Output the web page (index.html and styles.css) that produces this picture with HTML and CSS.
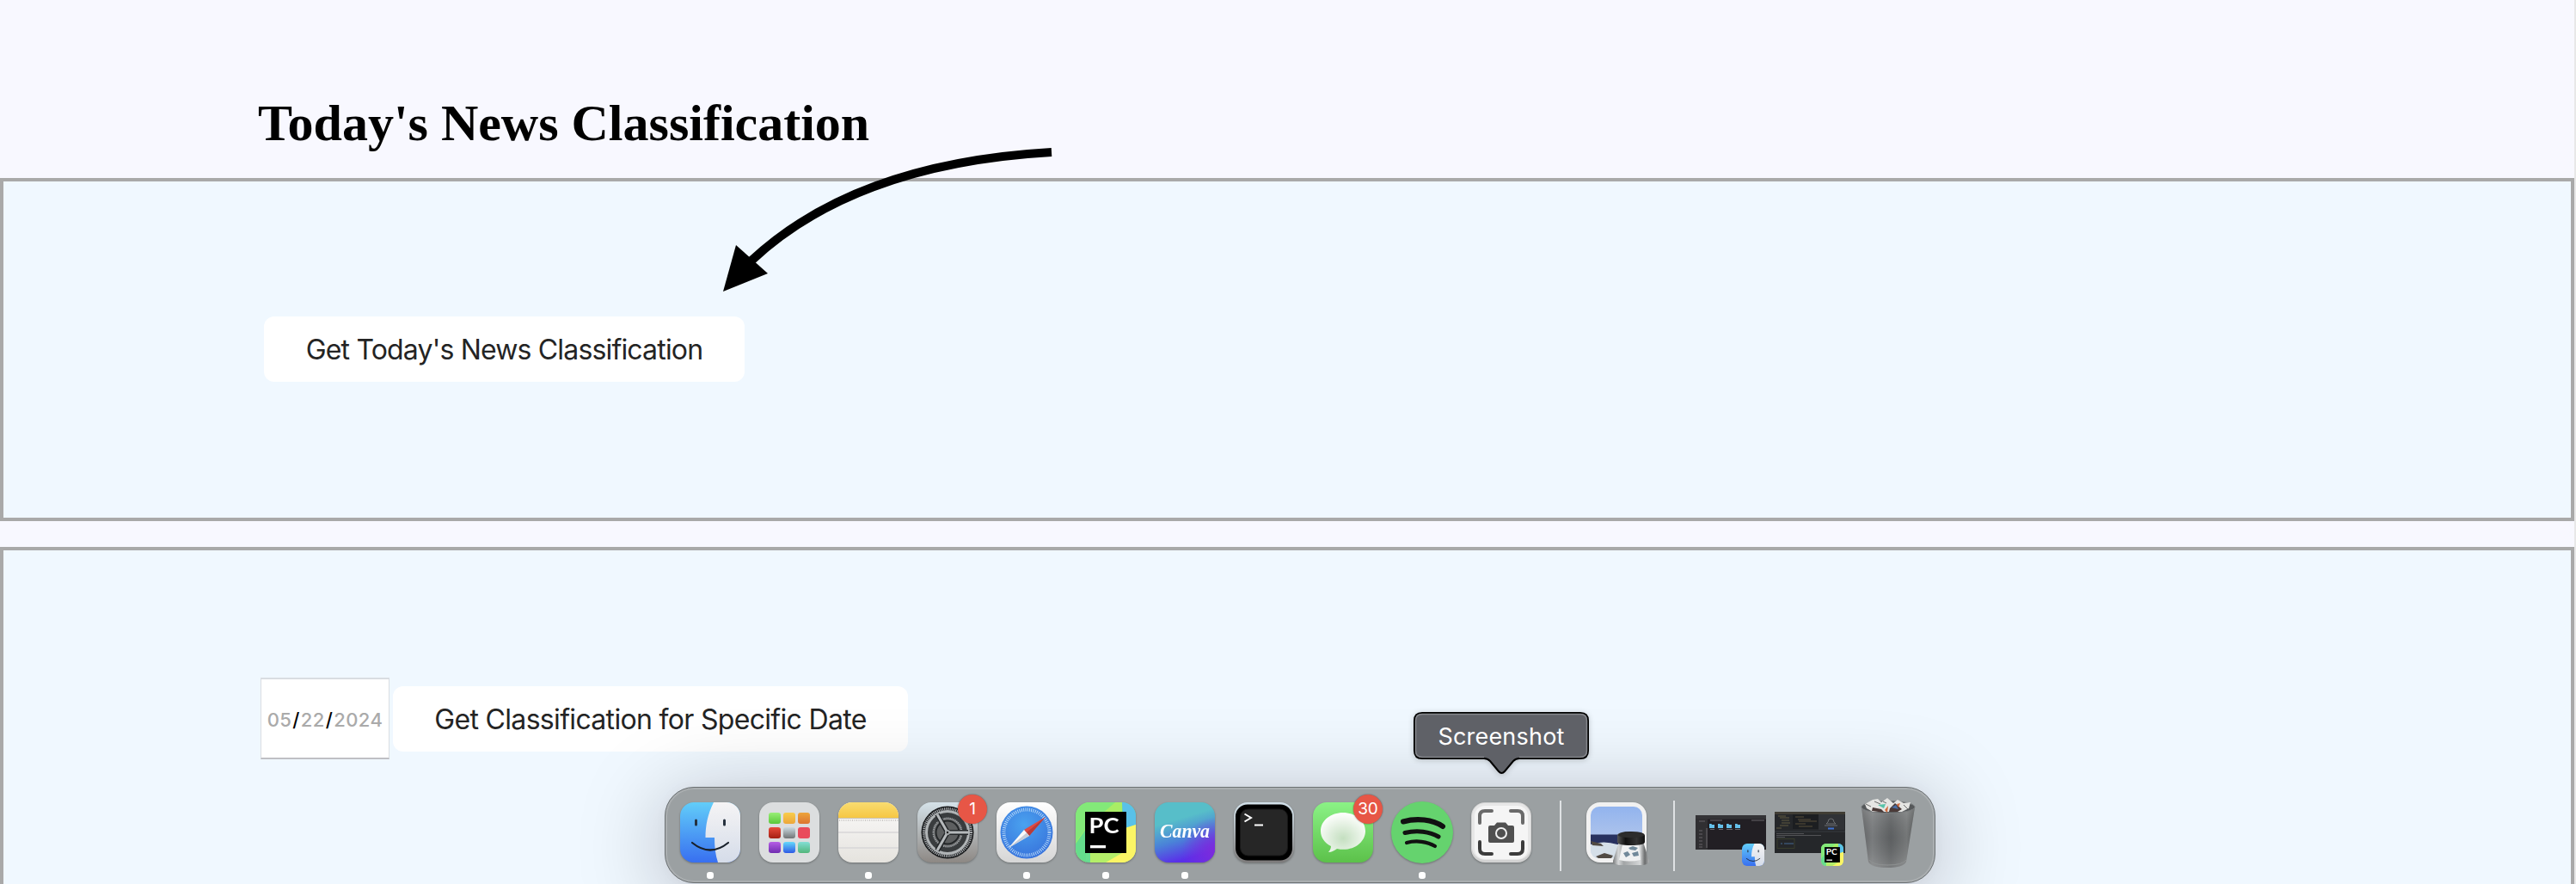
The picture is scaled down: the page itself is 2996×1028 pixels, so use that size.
FILE: index.html
```
<!DOCTYPE html>
<html lang="en">
<head>
<meta charset="utf-8">
<title>News Classification</title>
<link rel="stylesheet" href="styles.css">
</head>
<body>
<main class="page">
  <h1 class="title">Today's News Classification</h1>
  <section class="panel today">
    <button class="btn btn-today"><span class="t-today">Get Today's News Classification</span></button>
  </section>
  <section class="panel specific">
    <div class="date"><span>05</span><b>/</b><span>22</span><b>/</b><span>2024</span></div>
    <button class="btn btn-date"><span class="t-date">Get Classification for Specific Date</span></button>
  </section>
</main>

<svg class="arrow" viewBox="0 0 400 180" width="400" height="180">
  <path d="M393 17Q165 30 44 143" fill="none" stroke="#000" stroke-width="10"/>
  <path d="M11 179L26 125L63 158Z"/>
</svg>

<nav class="dock">
  <div class="app running">
    <svg class="icon" viewBox="0 0 70 70">
      <defs>
        <linearGradient id="fb" x2="0" y2="1"><stop stop-color="#62cdf9"/><stop offset="1" stop-color="#386ff0"/></linearGradient>
        <linearGradient id="fw" x2="0" y2="1"><stop stop-color="#f5f4f5"/><stop offset="1" stop-color="#d5dce9"/></linearGradient>
        <clipPath id="sq"><rect width="70" height="70" rx="16"/></clipPath>
      </defs>
      <g id="finder" clip-path="url(#sq)">
        <rect width="70" height="70" fill="url(#fb)"/>
        <path d="M39 0C32 14 29.500 27 29.500 41H40C40 52 41 61 44 70H70V0Z" fill="url(#fw)"/>
        <path d="M18.500 21V26M51.500 21V26" stroke="#26313f" stroke-width="3" stroke-linecap="round"/>
        <path d="M14 47Q35 64 56 47" fill="none" stroke="#18202b" stroke-width="2.200" stroke-linecap="round"/>
      </g>
    </svg>
  </div>
  <div class="app">
    <svg class="icon" viewBox="0 0 70 70">
      <defs>
        <linearGradient id="l1" x2="0" y2="1"><stop stop-color="#98ee76"/><stop offset="1" stop-color="#5bc83b"/></linearGradient>
        <linearGradient id="l2" x2="0" y2="1"><stop stop-color="#f8cd4c"/><stop offset="1" stop-color="#eda63a"/></linearGradient>
        <linearGradient id="l3" x2="0" y2="1"><stop stop-color="#eda43a"/><stop offset="1" stop-color="#dc7531"/></linearGradient>
        <linearGradient id="l4" x2="0" y2="1"><stop stop-color="#e94b3b"/><stop offset="1" stop-color="#a41f12"/></linearGradient>
        <linearGradient id="l5" x2="0" y2="1"><stop stop-color="#cbdae1"/><stop offset="1" stop-color="#717475"/></linearGradient>
        <linearGradient id="l7" x2="0" y2="1"><stop stop-color="#b65de6"/><stop offset="1" stop-color="#702db0"/></linearGradient>
        <linearGradient id="l8" x2="0" y2="1"><stop stop-color="#65d9fb"/><stop offset="1" stop-color="#2d59e5"/></linearGradient>
        <linearGradient id="l9" x2="0" y2="1"><stop stop-color="#83ded5"/><stop offset="1" stop-color="#52b67b"/></linearGradient>
      </defs>
      <rect width="70" height="70" rx="16" fill="#dcdedf"/>
      <rect x="11" y="12" width="14" height="13" rx="3" fill="url(#l1)"/><rect x="28" y="12" width="14" height="13" rx="3" fill="url(#l2)"/><rect x="45" y="12" width="14" height="13" rx="3" fill="url(#l3)"/>
      <rect x="11" y="29" width="14" height="13" rx="3" fill="url(#l4)"/><rect x="28" y="29" width="14" height="13" rx="3" fill="url(#l5)"/><rect x="45" y="29" width="14" height="13" rx="3" fill="#e94b5c"/>
      <rect x="11" y="46" width="14" height="13" rx="3" fill="url(#l7)"/><rect x="28" y="46" width="14" height="13" rx="3" fill="url(#l8)"/><rect x="45" y="46" width="14" height="13" rx="3" fill="url(#l9)"/>
    </svg>
  </div>
  <div class="app running">
    <svg class="icon" viewBox="0 0 70 70">
      <defs>
        <linearGradient id="ny" x2="0" y2="1"><stop stop-color="#f9dc70"/><stop offset="1" stop-color="#f6c744"/></linearGradient>
        <linearGradient id="nw" x2="0" y2="1"><stop stop-color="#fbfafa"/><stop offset="1" stop-color="#e5e3de"/></linearGradient>
      </defs>
      <g clip-path="url(#sq)">
        <rect width="70" height="70" fill="url(#nw)"/><rect width="70" height="18" fill="url(#ny)"/>
        <path d="M0 18.500H70" stroke="#c9c1ae"/><path d="M1 21H70" stroke="#bdbcb9" stroke-width="1.500" stroke-dasharray="1 1.500"/>
        <path d="M0 35H70M0 53H70" stroke="#d7d6d8" stroke-width="1.500"/>
      </g>
    </svg>
  </div>
  <div class="app">
    <svg class="icon" viewBox="0 0 70 70">
      <defs><linearGradient id="sg" x2="0" y2="1"><stop stop-color="#d5e2e9"/><stop offset="1" stop-color="#8d8884"/></linearGradient></defs>
      <rect width="70" height="70" rx="16" fill="url(#sg)"/>
      <circle cx="35" cy="35" r="30.500" fill="#17191b"/>
      <circle cx="35" cy="35" r="27.500" fill="none" stroke="#a9adb0" stroke-width="3" stroke-dasharray="1.200 1"/>
      <circle cx="35" cy="35" r="24.500" fill="#393c3e" stroke="#b0b4b6" stroke-width="3"/>
      <circle cx="35" cy="35" r="16.500" fill="#6c6d6e" stroke="#999da0" stroke-width="2" stroke-dasharray="1.300 .8"/>
      <circle cx="35" cy="35" r="13.500" fill="#5d5f60" stroke="#25282a" stroke-width="2"/>
      <path d="M35 35H59M35 35L23 14M35 35L23 56" stroke="#25282a" stroke-width="6"/>
      <path d="M35 35H59M35 35L23 14M35 35L23 56" stroke="#b5b9bb" stroke-width="3"/>
      <circle cx="35" cy="35" r="3" fill="#a6aaac"/><circle cx="35" cy="35" r="1.200" fill="#222"/>
    </svg>
    <span class="badge">1</span>
  </div>
  <div class="app running">
    <svg class="icon" viewBox="0 0 70 70">
      <defs>
        <linearGradient id="sw" x2="0" y2="1"><stop stop-color="#fff"/><stop offset="1" stop-color="#d6d6d6"/></linearGradient>
        <radialGradient id="sb" cx=".45" cy=".35" r=".65"><stop stop-color="#4aa2ef"/><stop offset="1" stop-color="#3874dc"/></radialGradient>
      </defs>
      <rect width="70" height="70" rx="16" fill="url(#sw)"/><circle cx="35" cy="35" r="30.500" fill="url(#sb)"/>
      <circle cx="35" cy="35" r="26.500" fill="none" stroke="#bcdcf9" stroke-width="4" stroke-dasharray=".9 1.412"/>
      <path d="M57 17L32 32L38 39Z" fill="#df4a43"/><path d="M57 17L35 35L38 39Z" fill="#b93b38"/>
      <path d="M14 53L32 32L38 39Z" fill="#fafafa"/><path d="M14 53L35 35.500L38 39Z" fill="#c6ccd6"/>
    </svg>
  </div>
  <div class="app running">
    <svg class="icon" viewBox="0 0 70 70">
      <defs><linearGradient id="pg" x2="1" y2="1"><stop stop-color="#84ee70"/><stop offset=".6" stop-color="#67dc92"/><stop offset="1" stop-color="#d4f267"/></linearGradient></defs>
      <g id="pycharm" clip-path="url(#sq)">
        <rect width="70" height="70" fill="url(#pg)"/>
        <path d="M0 47L15 18L46 0H54V24L12 30V70H0Z" fill="#a9ed65"/><path d="M0 48L12 31V70H0Z" fill="#65dc8c"/>
        <path d="M0 0H46L12 30L0 47Z" fill="#83e979"/>
        <path d="M54 0H70V26L56 31Z" fill="#59c1e9"/><path d="M54 31L70 26V70H17V60L54 57Z" fill="#fbf565"/>
        <path d="M17 59H54L35 70H17Z" fill="#b4ee69"/>
        <rect x="11" y="11" width="48" height="48"/><rect x="17" y="50" width="18" height="3.300" fill="#fff"/>
        <text x="15.500" y="35.500" class="pc" textLength="35" lengthAdjust="spacingAndGlyphs">PC</text>
      </g>
    </svg>
  </div>
  <div class="app running">
    <svg class="icon" viewBox="0 0 70 70">
      <defs>
        <linearGradient id="cg" x1=".4" y1="0" x2=".7" y2="1"><stop offset=".25" stop-color="#57bec9"/><stop offset=".58" stop-color="#4a82d8"/><stop offset=".9" stop-color="#5a2ee9"/></linearGradient>
        <radialGradient id="cp" cx="1" cy=".8" r=".55"><stop stop-color="#7e2bdc"/><stop offset="1" stop-color="#7e2bdc" stop-opacity="0"/></radialGradient>
      </defs>
      <rect width="70" height="70" rx="16" fill="url(#cg)"/><rect width="70" height="70" rx="16" fill="url(#cp)"/>
      <text x="6" y="41" class="canva" textLength="58" lengthAdjust="spacingAndGlyphs">Canva</text>
    </svg>
  </div>
  <div class="app">
    <svg class="icon" viewBox="0 0 70 70">
      <defs><linearGradient id="tg" x2="0" y2="1"><stop stop-color="#d3e2eb"/><stop offset="1" stop-color="#7d7b7b"/></linearGradient></defs>
      <rect width="70" height="70" rx="16" fill="url(#tg)"/><rect x="2" y="2.500" width="66" height="65" rx="14"/>
      <rect x="7.500" y="8" width="55" height="54" rx="9" fill="#262626" stroke="#171717"/>
      <path d="M12.500 13.500L20 18L12.500 22.500" fill="none" stroke="#fff" stroke-width="2"/><path d="M24 26.500H34" stroke="#fff" stroke-width="2"/>
    </svg>
  </div>
  <div class="app">
    <svg class="icon" viewBox="0 0 70 70">
      <defs>
        <linearGradient id="mg" x2="0" y2="1"><stop stop-color="#8bf286"/><stop offset="1" stop-color="#5cc14a"/></linearGradient>
        <radialGradient id="mb" cx=".5" cy=".65" r=".6"><stop stop-color="#c4dfc0"/><stop offset="1" stop-color="#fbfdfa"/></radialGradient>
      </defs>
      <rect width="70" height="70" rx="16" fill="url(#mg)"/>
      <path d="M35 12C21 12 9 21 9 33.500C9 41 13.500 47 21 51C21 54 19.500 56 18 58C22 58 25 56 28 54C46 58 61 47 61 33.500C61 21 49 12 35 12Z" fill="url(#mb)"/>
    </svg>
    <span class="badge">30</span>
  </div>
  <div class="app running">
    <svg class="icon" viewBox="0 0 70 70">
      <circle cx="35" cy="35" r="36" fill="#65d36e"/>
      <path d="M13 22.500C29 18 47 20 59 28" fill="none" stroke="#111" stroke-width="6" stroke-linecap="round"/>
      <path d="M15 35.500C29 32 44 34 54 40" fill="none" stroke="#111" stroke-width="5" stroke-linecap="round"/>
      <path d="M17 47C28 44 41 45.500 50 51" fill="none" stroke="#111" stroke-width="4.200" stroke-linecap="round"/>
    </svg>
  </div>
  <div class="app">
    <svg class="icon" viewBox="0 0 70 70">
      <rect width="70" height="70" rx="16" fill="#d2d2d2"/><rect x="1" y="1" width="68" height="66" rx="15" fill="#e7e7e7"/><rect x="4" y="4" width="62" height="62" rx="12" fill="#f5f5f5"/>
      <path d="M10 24V16Q10 10 16 10H24M46 10H54Q60 10 60 16V24" fill="none" stroke="#6a6a6a" stroke-width="4" stroke-linecap="round"/>
      <path d="M10 46V54Q10 60 16 60H24M46 60H54Q60 60 60 54V46" fill="none" stroke="#3c3c3c" stroke-width="4" stroke-linecap="round"/>
      <path d="M22 27H27L30 23.500H40L43 27H48Q50 27 50 29V45Q50 47 48 47H22Q20 47 20 45V29Q20 27 22 27Z" fill="#505050"/>
      <circle cx="35" cy="36" r="6" fill="#505050" stroke="#f1f1f1" stroke-width="2"/>
    </svg>
    <div class="tip">
      <svg class="tip-shape" viewBox="0 0 206 74" width="206" height="74">
        <path d="M10 2H194Q203 2 203 11V46Q203 55 194 55H123Q119 55 116 58L106 70Q102.500 74 99 70L89 58Q86 55 82 55H10Q1 55 1 46V11Q1 2 10 2Z" fill="#5f6167" stroke="#000" stroke-width="2"/>
        <path d="M82 53.500H10Q2.500 53.500 2.500 46V11Q2.500 3.500 10 3.500H194Q201.500 3.500 201.500 11V46Q201.500 53.500 194 53.500H123" fill="none" stroke="#85878c" stroke-width="1.500"/>
      </svg>
      <span class="tip-text">Screenshot</span>
    </div>
  </div>
  <i class="sep"></i>
  <div class="app">
    <svg class="icon" viewBox="0 0 70 70">
      <defs>
        <linearGradient id="sky" x2="0" y2="1"><stop stop-color="#92b4ee"/><stop offset="1" stop-color="#c0cdea"/></linearGradient>
        <linearGradient id="lens"><stop stop-color="#555"/><stop offset=".3" stop-color="#111"/><stop offset=".7" stop-color="#333"/><stop offset="1" stop-color="#111"/></linearGradient>
        <linearGradient id="glass"><stop stop-color="#77797a"/><stop offset=".15" stop-color="#d5d7d8"/><stop offset=".3" stop-color="#a2a5a6"/><stop offset=".75" stop-color="#d5d7d8"/><stop offset=".88" stop-color="#6a6c6d"/><stop offset="1" stop-color="#b0b2b3"/></linearGradient>
      </defs>
      <rect width="70" height="70" rx="16" fill="#f1f1f1"/>
      <rect x="5" y="5" width="60" height="60" rx="10" fill="url(#sky)"/>
      <path d="M5 37.500H65V50H5Z" fill="#28315f"/><path d="M5 49Q20 44 36 49L65 48V55Q65 65 55 65H15Q5 65 5 55Z" fill="#d5dfe8"/>
      <path d="M5 45L17 48L20 51L7 50ZM11 63L21 59L31 62L29 65H14Z" fill="#514a43"/>
    </svg>
    <svg class="loupe" viewBox="0 0 44 40" width="44" height="40">
      <path d="M8 12L1 34Q0 38 8 39H36Q44 38 43 34L36 12Z" fill="url(#glass)"/>
      <path d="M12 15L8 33Q20 36 33 33L31 15Z" fill="#f0f1f2"/>
      <path d="M19 19L24 17L30 19L27 22L21 21ZM13 25L18 23L21 27L16 30ZM23 25L30 23L31 28L25 29Z" fill="#71899a"/>
      <path d="M6 5Q6 0 22 0Q38 0 38 5V12Q38 16 22 16Q6 16 6 12Z" fill="url(#lens)"/><ellipse cx="22" cy="4" rx="15" ry="3.200" fill="#2c2c2c"/>
    </svg>
  </div>
  <i class="sep last"></i>
  <div class="thumb">
    <svg viewBox="0 0 82 40" width="82" height="40">
      <rect width="82" height="40" fill="#221f24"/><rect width="82" height="4.500" fill="#343437"/><rect y="4" width="14" height="36" fill="#302f32"/>
      <path d="M16 10h2.500l.5 1h3v4h-6zM26 10h2.500l.5 1h3v4h-6zM36 10h2.500l.5 1h3v4h-6zM46 10h2.500l.5 1h3v4h-6z" fill="#64bfe9"/>
      <path d="M17 16.500H22M27 16.500H32M36 16.500H43M46 16.500H52M17 6H31M65 6H80" stroke="#858188" stroke-width=".7"/>
      <path d="M4 7H11M4 18H8M4 22H8M4 26H8M4 30H8M4 34H8M4 37H8" stroke="#756e75" stroke-width=".8"/><path d="M13 15V38" stroke="#6c6b6e"/>
    </svg>
    <svg class="mini" viewBox="0 0 70 70"><use href="#finder"/></svg>
  </div>
  <div class="thumb">
    <svg viewBox="0 0 82 48" width="82" height="48">
      <rect width="82" height="48" fill="#25272a"/><rect width="82" height="3" fill="#403d34"/><rect x="21" y="3" width="30" height="17" fill="#1c1e21"/><rect x="51" y="3" width="30" height="18" fill="#303236"/>
      <path d="M4 5H13M6 7H17M8 10H17M8 13H18M6 16H16M2 19H8" stroke="#7a704c" stroke-width=".7"/>
      <path d="M24 6H34M27 9H42M28 11H49M24 14H36M28 17H44" stroke="#695b43" stroke-width=".8"/>
      <path d="M62 12Q62 8 65.500 8Q69 8 69 12L71 14H60Z" fill="none" stroke="#85888b" stroke-width=".7"/><path d="M58 16H73" stroke="#85888b" stroke-width=".7"/><rect x="62" y="18.500" width="7" height="2" fill="#3f70cf"/>
      <path d="M2 25.500H34M2 27.500H54M2 29.500H12" stroke="#65676a" stroke-width=".7"/><path d="M0 23H82" stroke="#393c40"/>
      <rect x="3" y="31.500" width="20" height="11" fill="none" stroke="#41462f" stroke-width=".7"/><path d="M7 37H9M11 37H22" stroke="#456991" stroke-width="1"/>
    </svg>
    <svg class="mini" viewBox="0 0 70 70"><use href="#pycharm"/></svg>
  </div>
  <div class="trash">
    <svg viewBox="0 0 64 84" width="64" height="84">
      <defs>
        <linearGradient id="can"><stop stop-color="#686a6c"/><stop offset=".2" stop-color="#85888a"/><stop offset=".55" stop-color="#646769"/><stop offset=".85" stop-color="#808384"/><stop offset="1" stop-color="#5b5e5f"/></linearGradient>
        <linearGradient id="cansh" x2="0" y2="1"><stop stop-color="#aaa" stop-opacity=".3"/><stop offset=".5" stop-color="#333" stop-opacity=".15"/><stop offset="1" stop-color="#aaa" stop-opacity=".3"/></linearGradient>
      </defs>
      <path d="M1 12L9 75Q12 82 31 82Q50 82 53 75L63 12Q50 18 32 18Q12 18 1 12Z" fill="url(#can)"/>
      <path d="M1 12L9 75Q12 82 31 82Q50 82 53 75L63 12Q50 18 32 18Q12 18 1 12Z" fill="url(#cansh)"/>
      <ellipse cx="32" cy="11.500" rx="31" ry="7" fill="#55585a" stroke="#7b7e80"/>
      <path d="M5 8L14 3L20 2L24 6L31 1L38 7L43 3L50 7L58 6L56 13L48 17H14L7 13Z" fill="#e5e5e3"/>
      <path d="M14 12L24 14L28 18L13 16ZM34 13L40 7L48 14L43 17L33 17Z" fill="#4a3a38"/><path d="M20 9L29 8L27 13Z" fill="#57c3a9"/><path d="M36 12L41 9L44 14Z" fill="#4a6fa8"/><path d="M28 15L32 10L31 18ZM42 8L46 7L44 12Z" fill="#cf693c"/>
      <path d="M6 8L12 11M16 5L23 8M50 9L55 14M26 5L30 7" stroke="#696a6a"/>
      <path d="M10 73Q14 79 31 79Q49 79 53 73" fill="none" stroke="#8f9293"/>
    </svg>
  </div>
</nav>
</body>
</html>
```

FILE: styles.css
```
* { box-sizing: border-box; }
html { background: #e8e8e8; }
body {
  margin: 0;
  width: 2996px;
  height: 1028px;
  overflow: hidden;
  position: relative;
  font-family: Inter, "Liberation Sans", sans-serif;
}
.page {
  width: 2994px;
  height: 1028px;
  background: #f8f8ff;
  overflow: hidden;
}
.title {
  margin: 0;
  height: 207px;
  padding: 106px 0 0 300px;
  font: bold 60px/74px "Liberation Serif", serif;
  color: #000;
}
.panel {
  display: flex;
  align-items: flex-start;
  background: #f0f8ff;
  border: 4px solid #a9a9a9;
}
.today { height: 399px; padding: 157px 0 0 303px; }
.specific { height: 440px; margin-top: 30px; padding: 148px 0 0 299px; }
.btn {
  height: 76px;
  padding: 2px 0 0;
  border: 0;
  border-radius: 12px;
  background: #fff;
  color: #242424;
  font: 32px/74px Inter, sans-serif;
  white-space: nowrap;
}
.btn-today { width: 559px; }
.btn-date { width: 599px; margin: 10px 0 0 4px; }
.t-today { letter-spacing: -.83px; }
.t-date { letter-spacing: -.68px; }
.date {
  display: flex;
  justify-content: center;
  width: 150px;
  height: 95px;
  background: #fff;
  border: 1px solid #d9dde2;
  border-top-width: 2px;
  border-bottom: 2px solid #bfbfc4;
  font: 500 22px/95px Inter, sans-serif;
  letter-spacing: .4px;
  color: #aaa;
}
.date b { padding: 0 1px; font-weight: 500; color: #000; }
.arrow { position: absolute; left: 830px; top: 160px; }
.dock {
  position: absolute;
  left: 773px;
  top: 915px;
  width: 1478px;
  height: 112px;
  padding: 18px 17px 0;
  display: flex;
  align-items: flex-start;
  gap: 22px;
  background: #9ba0a2;
  border: 1px solid #6c7173;
  border-radius: 34px;
  box-shadow: inset 0 0 0 2px #aaaeb0, 0 0 14px rgba(0, 0, 0, .03), 0 14px 100px rgba(10, 0, 20, .27);
}
.app { position: relative; flex: none; width: 70px; height: 90px; margin-top: -1px; }
.icon { display: block; width: 70px; height: 70px; overflow: visible; filter: drop-shadow(0 1px 1px rgba(0, 0, 0, .3)); }
.running::after {
  content: "";
  display: block;
  width: 8px;
  height: 8px;
  margin: 11px auto 0;
  border-radius: 3px;
  background: #fff;
}
.badge {
  position: absolute;
  right: -11px;
  top: -9px;
  width: 34px;
  height: 34px;
  border-radius: 50%;
  background: #e75646;
  color: #fff;
  font-size: 19px;
  line-height: 34px;
  text-align: center;
  box-shadow: 0 0 2px rgba(0, 0, 0, .5);
}
.pc { font: bold 25px Lato, sans-serif; fill: #fff; }
.canva { font: italic bold 24px "Z003", "URW Chancery L", "Liberation Serif", serif; fill: #fff; }
.tip { position: absolute; left: -67px; top: -106px; width: 206px; height: 74px; }
.tip-shape { display: block; filter: drop-shadow(0 1px 3px rgba(0, 0, 0, .2)); }
.tip-text {
  position: absolute;
  left: 0;
  top: 2px;
  width: 204px;
  text-align: center;
  font-size: 27px;
  letter-spacing: .2px;
  line-height: 56px;
  color: #fff;
}
.sep { flex: none; width: 2px; height: 82px; margin: -3px 7px 0 11px; background: #dfe2e4; }
.last { margin-left: 9px; }
.loupe { position: absolute; left: 30px; top: 34px; }
.thumb { position: relative; flex: none; width: 82px; height: 76px; margin: 10px -12px 0 0; display: flex; }
.sep + .thumb { margin-left: -5px; margin-top: 14px; }
.mini { position: absolute; left: 54px; top: 37px; width: 26px; height: 26px; }
.sep + .thumb .mini { top: 33px; }
.trash { flex: none; margin: -7px 0 0 8px; }
```
